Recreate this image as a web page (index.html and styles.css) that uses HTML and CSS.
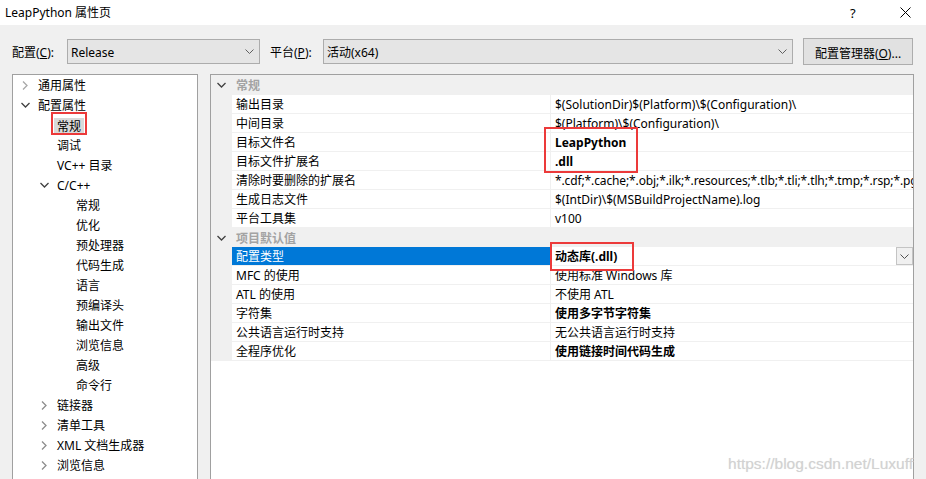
FILE: index.html
```html
<!DOCTYPE html>
<html lang="zh-CN">
<head>
<meta charset="utf-8">
<title>LeapPython 属性页</title>
<link rel="stylesheet" href="styles.css">
</head>
<body>
<div class="window">
  <div class="titlebar">
    <span class="title">LeapPython 属性页</span>
    <span class="tb-btns">
      <span class="help">?</span>
      <svg class="close" width="11" height="11" viewBox="0 0 11 11"><path d="M0.5 0.5 L10.5 10.5 M10.5 0.5 L0.5 10.5" stroke="#000" stroke-width="1" fill="none"/></svg>
    </span>
  </div>

  <div class="toolbar">
    <span class="lbl lbl-cfg">配置(<u>C</u>):</span>
    <div class="combo combo-cfg"><span>Release</span><svg class="dd" width="9" height="5" viewBox="0 0 9 5"><path d="M0.5 0.5 L4.5 4.5 L8.5 0.5" stroke="#606060" fill="none"/></svg></div>
    <span class="lbl lbl-plat">平台(<u>P</u>):</span>
    <div class="combo combo-plat"><span>活动(x64)</span><svg class="dd" width="9" height="5" viewBox="0 0 9 5"><path d="M0.5 0.5 L4.5 4.5 L8.5 0.5" stroke="#606060" fill="none"/></svg></div>
    <button class="btn">配置管理器(<u>O</u>)...</button>
  </div>

  <div class="main">
    <div class="tree">
      <div class="node l0"><span class="chev"><svg width="6" height="9" viewBox="0 0 6 9"><path d="M1 0.5 L5 4.5 L1 8.5" stroke="#a8a8a8" stroke-width="1.3" fill="none"/></svg></span><span>通用属性</span></div>
      <div class="node l0"><span class="chev"><svg width="9" height="6" viewBox="0 0 9 6"><path d="M0.5 1 L4.5 5 L8.5 1" stroke="#404040" stroke-width="1.3" fill="none"/></svg></span><span>配置属性</span></div>
      <div class="node l1"><span class="chev"></span><span class="sel">常规</span></div>
      <div class="node l1"><span class="chev"></span><span>调试</span></div>
      <div class="node l1"><span class="chev"></span><span>VC++ 目录</span></div>
      <div class="node l1"><span class="chev"><svg width="9" height="6" viewBox="0 0 9 6"><path d="M0.5 1 L4.5 5 L8.5 1" stroke="#404040" stroke-width="1.3" fill="none"/></svg></span><span>C/C++</span></div>
      <div class="node l2"><span class="chev"></span><span>常规</span></div>
      <div class="node l2"><span class="chev"></span><span>优化</span></div>
      <div class="node l2"><span class="chev"></span><span>预处理器</span></div>
      <div class="node l2"><span class="chev"></span><span>代码生成</span></div>
      <div class="node l2"><span class="chev"></span><span>语言</span></div>
      <div class="node l2"><span class="chev"></span><span>预编译头</span></div>
      <div class="node l2"><span class="chev"></span><span>输出文件</span></div>
      <div class="node l2"><span class="chev"></span><span>浏览信息</span></div>
      <div class="node l2"><span class="chev"></span><span>高级</span></div>
      <div class="node l2"><span class="chev"></span><span>命令行</span></div>
      <div class="node l1"><span class="chev"><svg width="6" height="9" viewBox="0 0 6 9"><path d="M1 0.5 L5 4.5 L1 8.5" stroke="#8c8c8c" stroke-width="1.3" fill="none"/></svg></span><span>链接器</span></div>
      <div class="node l1"><span class="chev"><svg width="6" height="9" viewBox="0 0 6 9"><path d="M1 0.5 L5 4.5 L1 8.5" stroke="#8c8c8c" stroke-width="1.3" fill="none"/></svg></span><span>清单工具</span></div>
      <div class="node l1"><span class="chev"><svg width="6" height="9" viewBox="0 0 6 9"><path d="M1 0.5 L5 4.5 L1 8.5" stroke="#8c8c8c" stroke-width="1.3" fill="none"/></svg></span><span>XML 文档生成器</span></div>
      <div class="node l1"><span class="chev"><svg width="6" height="9" viewBox="0 0 6 9"><path d="M1 0.5 L5 4.5 L1 8.5" stroke="#8c8c8c" stroke-width="1.3" fill="none"/></svg></span><span>浏览信息</span></div>
    </div>

    <div class="grid">
      <div class="cat first">
        <span class="gut"><svg width="9" height="6" viewBox="0 0 9 6"><path d="M0.5 1 L4.5 5 L8.5 1" stroke="#404040" stroke-width="1.3" fill="none"/></svg></span>
        <span class="cat-name">常规</span>
      </div>
      <div class="prow"><span class="gut"></span><span class="pn">输出目录</span><span class="pv">$(SolutionDir)$(Platform)\$(Configuration)\</span></div>
      <div class="prow"><span class="gut"></span><span class="pn">中间目录</span><span class="pv">$(Platform)\$(Configuration)\</span></div>
      <div class="prow"><span class="gut"></span><span class="pn">目标文件名</span><span class="pv b"><span class="mark mark-name">LeapPython</span></span></div>
      <div class="prow"><span class="gut"></span><span class="pn">目标文件扩展名</span><span class="pv b">.dll</span></div>
      <div class="prow"><span class="gut"></span><span class="pn">清除时要删除的扩展名</span><span class="pv clip">*.cdf;*.cache;*.obj;*.ilk;*.resources;*.tlb;*.tli;*.tlh;*.tmp;*.rsp;*.pgc;*.pgd;*.meta;$(TargetPath)</span></div>
      <div class="prow"><span class="gut"></span><span class="pn">生成日志文件</span><span class="pv">$(IntDir)\$(MSBuildProjectName).log</span></div>
      <div class="prow"><span class="gut"></span><span class="pn">平台工具集</span><span class="pv">v100</span></div>
      <div class="cat">
        <span class="gut"><svg width="9" height="6" viewBox="0 0 9 6"><path d="M0.5 1 L4.5 5 L8.5 1" stroke="#404040" stroke-width="1.3" fill="none"/></svg></span>
        <span class="cat-name">项目默认值</span>
      </div>
      <div class="prow active"><span class="gut"></span><span class="pn">配置类型</span><span class="pv b"><span class="mark mark-type">动态库(.dll)</span><span class="vbtn"><svg width="9" height="5" viewBox="0 0 9 5"><path d="M0.5 0.5 L4.5 4.5 L8.5 0.5" stroke="#505050" fill="none"/></svg></span></span></div>
      <div class="prow"><span class="gut"></span><span class="pn">MFC 的使用</span><span class="pv">使用标准 Windows 库</span></div>
      <div class="prow"><span class="gut"></span><span class="pn">ATL 的使用</span><span class="pv">不使用 ATL</span></div>
      <div class="prow"><span class="gut"></span><span class="pn">字符集</span><span class="pv b">使用多字节字符集</span></div>
      <div class="prow"><span class="gut"></span><span class="pn">公共语言运行时支持</span><span class="pv">无公共语言运行时支持</span></div>
      <div class="prow"><span class="gut"></span><span class="pn">全程序优化</span><span class="pv b">使用链接时间代码生成</span></div>
    </div>
  </div>

  <div class="watermark">https://blog.csdn.net/Luxuff</div>
</div>
</body>
</html>
```

FILE: styles.css
```css
* { box-sizing: border-box; }

html, body {
  margin: 0;
  padding: 0;
  overflow: hidden;
}

body {
  font-family: "Noto Sans", "Noto Sans CJK SC", sans-serif;
  font-size: 12px;
  color: #000;
}

.window {
  position: relative;
  width: 926px;
  height: 479px;
  background: #f0f0f0;
  overflow: hidden;
}

/* title bar */
.titlebar {
  height: 25px;
  background: #fff;
  display: flex;
  align-items: center;
  padding-left: 5px;
}
.title { font-size: 12px; line-height: 16px; }
.tb-btns {
  margin-left: auto;
  display: flex;
  align-items: center;
}
.help {
  font-size: 13px;
  width: 10px;
  margin-right: 40px;
}
.close { margin-right: 15px; }

/* toolbar */
.toolbar {
  display: flex;
  align-items: center;
  height: 27px;
  margin: 13px 0 9px 12px;
}
.lbl { line-height: 16px; padding-top: 2px; white-space: nowrap; }
.lbl-cfg { width: 55px; }
.lbl-plat { width: 53px; margin-left: 10px; }
u { text-decoration: underline; text-underline-offset: 1px; }

.combo {
  height: 25px;
  background: #e5e5e5;
  border: 1px solid #acacac;
  display: flex;
  align-items: center;
  padding: 0 5px 0 3px;
}
.combo span { line-height: 16px; padding-top: 2px; }
.combo .dd { margin-left: auto; }
.combo-cfg { width: 193px; }
.combo-plat { width: 470px; }

.btn {
  width: 110px;
  height: 27px;
  margin-left: 10px;
  background: #e1e1e1;
  border: 1px solid #adadad;
  font: inherit;
  padding: 2px 0 0;
  color: #000;
}

/* main panels */
.main {
  display: flex;
  gap: 12px;
  padding-left: 12px;
  height: 410px;
}

.tree {
  width: 186px;
  height: 420px;
  background: #fff;
  border: 1px solid #a0a0a0;
}
.node {
  height: 20px;
  display: flex;
  align-items: center;
  line-height: 16px;
  padding-top: 2px;
  white-space: nowrap;
}
.node.l0 { padding-left: 6px; }
.node.l1 { padding-left: 25px; }
.node.l2 { padding-left: 44px; }
.chev {
  width: 12px;
  margin-right: 7px;
  display: flex;
  justify-content: center;
  align-items: center;
  flex: none;
  margin-top: -2px;
}
.sel {
  position: relative;
  background: #d9d9d9;
  padding: 1px 3px 0;
  margin-left: -3px;
}
.sel::after {
  content: "";
  position: absolute;
  left: -3px;
  right: -3px;
  top: -6px;
  bottom: 0px;
  border: 2px solid #ec3a3a;
}

.grid {
  width: 704px;
  height: 420px;
  background: #fff;
  border: 1px solid #a0a0a0;
}
.gut {
  width: 21px;
  flex: none;
  background: #f0f0f0;
  display: flex;
  align-items: center;
  justify-content: center;
  align-self: stretch;
}
.cat {
  height: 19px;
  display: flex;
  align-items: center;
  background: #f0f0f0;
}
.cat.first { height: 20px; }
.cat-name {
  padding-left: 4px;
  padding-top: 2px;
  color: #a3a3a3;
  font-weight: bold;
  line-height: 16px;
}
.prow {
  height: 19px;
  display: flex;
}
.pn, .pv {
  border-bottom: 1px solid #f0f0f0;
  display: flex;
  align-items: center;
  padding-left: 4px;
  padding-top: 2px;
  white-space: nowrap;
  overflow: hidden;
  line-height: 16px;
}
.pn {
  width: 319px;
  flex: none;
  border-right: 1px solid #f0f0f0;
}
.pv {
  flex: 1;
  min-width: 0;
}
.pv.clip { letter-spacing: -0.12px; }
.pv.b { font-weight: bold; overflow: visible; }
.prow.active .pn {
  background: #0078d7;
  color: #fff;
}

.mark { position: relative; }
.mark-name::after {
  content: "";
  position: absolute;
  left: -11px;
  top: -8px;
  width: 90px;
  height: 42px;
  border: 2px solid #ec3a3a;
  z-index: 2;
}
.mark-type::after {
  content: "";
  position: absolute;
  left: -5px;
  top: -7px;
  width: 80px;
  height: 25px;
  border: 2px solid #ec3a3a;
  z-index: 2;
}
.vbtn {
  margin-left: auto;
  width: 17px;
  height: 18px;
  margin-top: -2px;
  background: #f0f0f0;
  border: 1px solid #c4c4c4;
  display: flex;
  align-items: center;
  justify-content: center;
  align-self: flex-start;
}

.watermark {
  position: absolute;
  right: 13px;
  bottom: 6px;
  font-family: "Liberation Sans", Arial, sans-serif;
  font-size: 15.5px;
  color: #d2d2d2;
  text-shadow: 0 0 1px #e6e6e6;
}
```
